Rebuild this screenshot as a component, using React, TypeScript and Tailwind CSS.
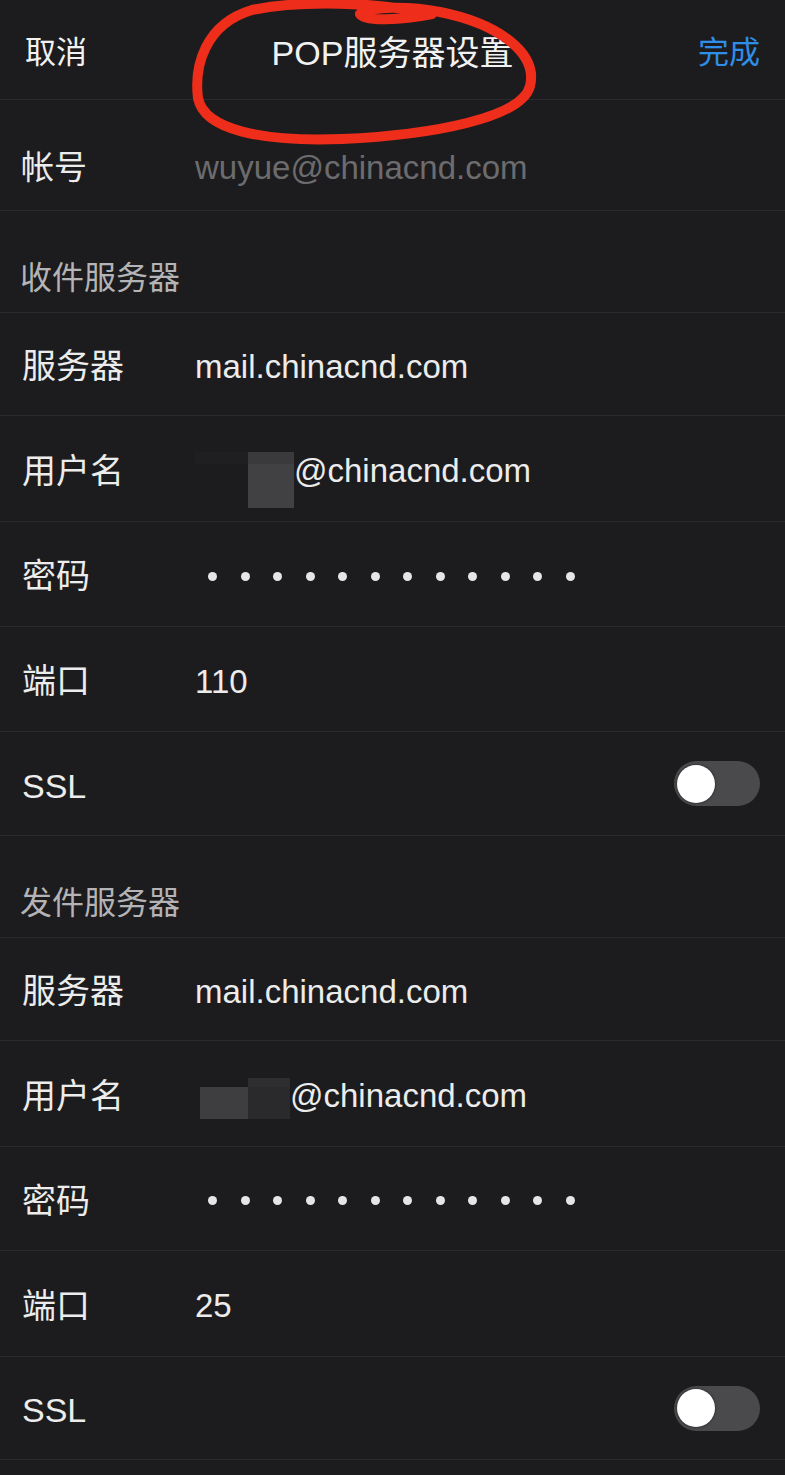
import React from "react";

const font = { fontFamily: '"Liberation Sans", "Noto Sans CJK SC", sans-serif' };

function Toggle() {
  return (
    <div className="w-[86px] h-[45px] rounded-full bg-[#4a4a4c] flex items-center px-[3px]">
      <div className="w-[38px] h-[38px] rounded-full bg-white shadow-[0_0_2px_1px_rgba(0,0,0,0.25)]" />
    </div>
  );
}

function Dots() {
  return (
    <div className="flex items-center gap-[23.5px] pl-[13px]">
      {Array.from({ length: 12 }).map((_, i) => (
        <div key={i} className="w-[9px] h-[9px] rounded-full bg-[#e6e6e6]" />
      ))}
    </div>
  );
}

function Row({
  h,
  label,
  children,
  right,
}: {
  h: string;
  label: string;
  children?: React.ReactNode;
  right?: React.ReactNode;
}) {
  return (
    <div className={`${h} flex items-center border-b border-[#2a2a2c] pl-[22px] pr-[25px]`}>
      <div className="w-[173px] shrink-0 text-[34px] text-[#ececec] leading-none pt-[4px]">{label}</div>
      <div className="flex-1 flex items-center text-[33px] text-[#ececec] leading-none pt-[4px]">{children}</div>
      {right}
    </div>
  );
}

function Section({ h, title }: { h: string; title: string }) {
  return (
    <div className={`${h} flex items-end pb-[18px] border-b border-[#2a2a2c] pl-[20px]`}>
      <div className="text-[32px] text-[#b4b4b6] leading-none">{title}</div>
    </div>
  );
}

export default function App() {
  return (
    <div className="relative w-[785px] h-[1475px] bg-[#1c1c1e] overflow-hidden" style={font}>
      {/* Header */}
      <div className="h-[100px] flex items-center justify-between border-b border-[#2a2a2c] pl-[25px] pr-[25px] pt-[6px] relative">
        <div className="text-[31px] text-[#f2f2f2] leading-none">取消</div>
        <div className="absolute left-0 right-0 top-0 h-full pt-[6px] flex items-center justify-center text-[34px] text-[#f2f2f2] leading-none pointer-events-none">
          POP服务器设置
        </div>
        <div className="text-[31px] text-[#2f8ee8] leading-none">完成</div>
      </div>

      {/* Account */}
      <div className="h-[111px] flex items-center pt-[24px] border-b border-[#2a2a2c] pl-[21px]">
        <div className="w-[174px] shrink-0 text-[33px] text-[#ececec] leading-none">帐号</div>
        <div className="text-[33px] text-[#6c6c6e] leading-none">wuyue@chinacnd.com</div>
      </div>

      <Section h="h-[102px]" title="收件服务器" />
      <Row h="h-[103px]" label="服务器">mail.chinacnd.com</Row>
      <Row h="h-[106px]" label="用户名">
        <div className="w-[53px] h-[56px] flex flex-col mt-[18px]">
          <div className="h-[12px] bg-[#1f1f21]" />
        </div>
        <div className="w-[46px] h-[56px] mt-[18px] flex flex-col">
          <div className="h-[12px] bg-[#3a3a3c]" />
          <div className="flex-1 bg-[#414143]" />
        </div>
        <span>@chinacnd.com</span>
      </Row>
      <Row h="h-[105px]" label="密码">
        <Dots />
      </Row>
      <Row h="h-[105px]" label="端口">110</Row>
      <Row h="h-[104px]" label="SSL" right={<Toggle />} />

      <Section h="h-[102px]" title="发件服务器" />
      <Row h="h-[103px]" label="服务器">mail.chinacnd.com</Row>
      <Row h="h-[106px]" label="用户名">
        <div className="w-[5px]" />
        <div className="w-[48px] h-[32px] bg-[#3e3e40] mt-[14px]" />
        <div className="w-[42px] h-[41px] mt-[5px] flex flex-col">
          <div className="h-[9px] bg-[#2e2e30]" />
          <div className="flex-1 bg-[#2a2a2c]" />
        </div>
        <span>@chinacnd.com</span>
      </Row>
      <Row h="h-[104px]" label="密码">
        <Dots />
      </Row>
      <Row h="h-[106px]" label="端口">25</Row>
      <Row h="h-[103px]" label="SSL" right={<Toggle />} />

      {/* Red annotation */}
      <svg
        className="absolute left-0 top-0 pointer-events-none"
        width="785"
        height="160"
        viewBox="0 0 785 160"
      >
        <path
          d="M 428 14 C 380 2, 300 0, 252 10 C 205 24, 194 66, 198 98 C 204 130, 262 142, 342 139 C 432 135, 522 118, 530 86 C 538 54, 500 24, 440 12 C 410 6, 372 6, 360 14 C 364 22, 402 20, 432 14"
          fill="none"
          stroke="#ee2d1a"
          strokeWidth="10"
          strokeLinecap="round"
          strokeLinejoin="round"
        />
      </svg>
    </div>
  );
}
